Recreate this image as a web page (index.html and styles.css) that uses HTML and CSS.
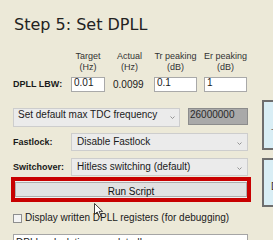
FILE: index.html
```html
<!DOCTYPE html>
<html lang="en">
<head>
  <meta charset="UTF-8">
  <title>Step 5: Set DPLL</title>
  <link rel="stylesheet" href="styles.css">
</head>
<body>
  <!-- DPLL settings -->
  <div class="panel">
    <h2 class="step-title">Step 5: Set DPLL</h2>

    <div class="lbw-grid">
      <div></div>
      <div class="col-head">Target<br>(Hz)</div>
      <div class="col-head">Actual<br>(Hz)</div>
      <div class="col-head narrow">Tr peaking<br>(dB)</div>
      <div class="col-head">Er peaking<br>(dB)</div>

      <div class="field-label">DPLL LBW:</div>
      <div class="textbox">0.01</div>
      <div class="readout">0.0099</div>
      <div class="textbox narrow">0.1</div>
      <div class="textbox">1</div>
    </div>

    <div class="tdc-row">
      <div class="dropdown wide">
        <span>Set default max TDC frequency</span>
        <svg class="chevron" viewBox="0 0 5 3"><path d="M0.5 0.5 L2.5 2.5 L4.5 0.5" fill="none" stroke="#8a8a8a" stroke-width="0.9"/></svg>
      </div>
      <div class="tdc-value">26000000</div>
    </div>

    <div class="field-row">
      <div class="field-label">Fastlock:</div>
      <div class="dropdown short">
        <span>Disable Fastlock</span>
        <svg class="chevron" viewBox="0 0 5 3"><path d="M0.5 0.5 L2.5 2.5 L4.5 0.5" fill="none" stroke="#8a8a8a" stroke-width="0.9"/></svg>
      </div>
    </div>

    <div class="field-row switch-row">
      <div class="field-label">Switchover:</div>
      <div class="dropdown short">
        <span>Hitless switching (default)</span>
        <svg class="chevron" viewBox="0 0 5 3"><path d="M0.5 0.5 L2.5 2.5 L4.5 0.5" fill="none" stroke="#8a8a8a" stroke-width="0.9"/></svg>
      </div>
    </div>

    <div class="run-wrap">
      <button class="run-btn">Run Script</button>
    </div>

    <label class="check-row">
      <span class="check"></span>
      <span>Display written DPLL registers (for debugging)</span>
    </label>

    <div class="status-box">DPLL calculation completed!</div>
  </div>

  <!-- Right hand buttons (cut off) -->
  <div class="side">
    <div class="side-box"><span class="side-mark light">-</span></div>
    <div class="side-box"><span class="side-mark">D</span></div>
  </div>

  <svg class="cursor" width="10" height="15" viewBox="0 0 10 15">
    <path d="M0.5 0.5 L0.5 11.5 L3.2 9 L5.2 13.5 L7 12.7 L5.1 8.4 L8.6 8.4 Z" fill="#fff" stroke="#111" stroke-width="0.8"/>
  </svg>
</body>
</html>
```

FILE: styles.css
```css
* {
  margin: 0;
  padding: 0;
  box-sizing: border-box;
}

body {
  width: 273px;
  height: 240px;
  overflow: hidden;
  display: flex;
  position: relative;
  background-color: #ece9d8;
  font-family: "Liberation Sans", Arial, sans-serif;
  color: #1a1a1a;
}

.panel {
  width: 262px;
  flex-shrink: 0;
  padding: 15px 0 0 13px;
}

.step-title {
  font-family: "DejaVu Sans", sans-serif;
  font-size: 16px;
  line-height: 19px;
  font-weight: normal;
  margin-left: 1px;
  color: #222;
}

/* Loop bandwidth grid */
.lbw-grid {
  display: grid;
  grid-template-columns: 58px 34px 49px 50px 43px;
  grid-template-rows: 22px 15px;
  row-gap: 4px;
  margin-top: 17px;
}

.col-head {
  font-size: 9px;
  line-height: 11px;
  text-align: center;
  white-space: nowrap;
  color: #333;
}

.narrow {
  width: 43px;
}

.field-label {
  font-size: 9px;
  line-height: 10px;
  font-weight: bold;
  white-space: nowrap;
}

.lbw-grid .field-label {
  margin-top: 2px;
}

.textbox {
  height: 15px;
  padding: 0 2px;
  background-color: #fff;
  border: 1px solid #a9a9a9;
  font-size: 10px;
  line-height: 10px;
}

.readout {
  font-size: 10px;
  line-height: 10px;
  padding: 3px 0 0 8px;
}

/* Dropdowns */
.tdc-row {
  display: flex;
  gap: 8px;
  margin-top: 16px;
}

.dropdown {
  display: flex;
  justify-content: space-between;
  height: 19px;
  padding: 0 4px;
  background-color: #ebebeb;
  border: 1px solid #cdcdcd;
  font-size: 10px;
  line-height: 11px;
  white-space: nowrap;
}

.dropdown.wide {
  width: 167px;
}

.dropdown.short {
  width: 177px;
  height: 18px;
  padding: 2px 5px 0;
}

.chevron {
  width: 5px;
  height: 3px;
  align-self: center;
}

.tdc-value {
  width: 60px;
  height: 17px;
  padding-left: 1px;
  background-color: #a9a9a9;
  border: 1px solid #8c8c8c;
  font-size: 10px;
  line-height: 11px;
  color: #2a2a2a;
}

.field-row {
  display: flex;
  margin-top: 6px;
}

.field-row.switch-row {
  margin-top: 7px;
}

.field-row .field-label {
  width: 58px;
  padding-top: 4px;
}

/* Run button */
.run-wrap {
  width: 240px;
  margin: 1px 0 0 -2px;
  padding: 1px 0;
  border: 4px solid #c80000;
  background-color: #f0f0f0;
}

.run-btn {
  display: block;
  width: 100%;
  height: 15px;
  padding: 3px 0 0;
  background-color: #e1e1e1;
  border: 1px solid #adadad;
  font-family: inherit;
  font-size: 10px;
  line-height: 11px;
  text-align: center;
  color: #111;
}

.check-row {
  display: flex;
  align-items: flex-start;
  gap: 3px;
  margin-top: 10px;
  font-size: 10px;
  line-height: 11px;
  white-space: nowrap;
}

.check {
  width: 9px;
  height: 9px;
  margin-top: 2px;
  background-color: #f4f4f4;
  border: 1px solid #8e8f8f;
}

.status-box {
  width: 235px;
  height: 20px;
  margin-top: 11px;
  padding: 2px;
  background-color: #fff;
  border: 1px solid #a5a5a5;
  font-size: 10px;
  line-height: 11px;
}

/* Side panel */
.side {
  display: flex;
  flex-direction: column;
  gap: 8px;
  padding-top: 100px;
  flex-shrink: 0;
}

.side-box {
  display: flex;
  align-items: center;
  width: 30px;
  height: 50px;
  padding: 6px 0 0 7px;
  background-color: #d9eef5;
  border: 2px solid #6e6e6e;
  font-size: 10px;
}

.side-box + .side-box {
  height: 49px;
  padding-top: 8px;
}

.side-mark {
  color: #3a2a2a;
}

.side-mark.light {
  color: #777;
}

.cursor {
  position: absolute;
  left: 94px;
  top: 203px;
}
```
